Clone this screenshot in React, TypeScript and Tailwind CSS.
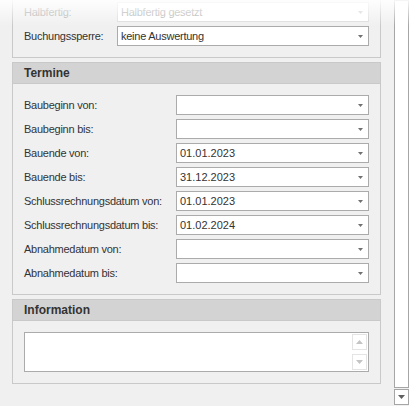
import React from "react";

const font = { fontFamily: '"Liberation Sans", Arial, sans-serif' };

function Arrow({ light }: { light?: boolean }) {
  return (
    <svg width="5" height="3" viewBox="0 0 5 3" className="shrink-0">
      <path d="M0 0H5L2.5 3Z" fill={light ? "#cfcfcf" : "#707070"} />
    </svg>
  );
}

function Combo({ value, disabled, date }: { value?: string; disabled?: boolean; date?: boolean }) {
  return (
    <div
      className={`flex h-5 flex-1 items-center justify-between border bg-white pl-[3px] pr-[5px] ${
        disabled ? "border-[#dcdcdc] text-[#a8a8a8]" : "border-[#ababab] text-[#333]"
      }`}
    >
      <span className={`leading-none ${date ? "tracking-normal" : ""}`}>{value}</span>
      <Arrow light={disabled} />
    </div>
  );
}

function Row({
  label,
  value,
  labelWidth,
  disabled,
  date,
}: {
  label: string;
  value?: string;
  labelWidth: string;
  disabled?: boolean;
  date?: boolean;
}) {
  return (
    <div className="flex h-5 items-center">
      <div className={`${labelWidth} shrink-0 ${disabled ? "text-[#a8a8a8]" : "text-[#333]"}`}>{label}</div>
      <Combo value={value} disabled={disabled} date={date} />
    </div>
  );
}

function Group({ title, children }: { title: string; children: React.ReactNode }) {
  return (
    <div className="border border-[#c9c9c9]">
      <div className="flex h-[21px] items-center border-b border-[#c9c9c9] bg-[#d3d3d3] pl-[11px] text-[12px] font-bold tracking-normal text-[#333]">
        {title}
      </div>
      <div className="px-[11px] pt-[11px] pb-[11px]">{children}</div>
    </div>
  );
}

function Spin({ up }: { up?: boolean }) {
  return (
    <div className="flex h-4 w-[15px] items-center justify-center border border-[#e4e4e4] bg-white">
      <svg width="7" height="4" viewBox="0 0 7 4">
        <path d={up ? "M0 4H7L3.5 0Z" : "M0 0H7L3.5 4Z"} fill="#c4c4c4" />
      </svg>
    </div>
  );
}

const termine: [string, string][] = [
  ["Baubeginn von:", ""],
  ["Baubeginn bis:", ""],
  ["Bauende von:", "01.01.2023"],
  ["Bauende bis:", "31.12.2023"],
  ["Schlussrechnungsdatum von:", "01.01.2023"],
  ["Schlussrechnungsdatum bis:", "01.02.2024"],
  ["Abnahmedatum von:", ""],
  ["Abnahmedatum bis:", ""],
];

export default function App() {
  return (
    <div
      className="relative flex h-[406px] w-[409px] overflow-hidden bg-[#f0f0f0] text-[11px] tracking-[-0.25px]"
      style={font}
    >
      <div className="flex w-[381px] flex-col gap-1 pl-3">
        <div className="border border-t-0 border-[#c9c9c9] px-[11px] pt-[2px] pb-[11px]">
          <div className="flex flex-col gap-1">
            <Row label="Halbfertig:" value="Halbfertig gesetzt" labelWidth="w-[93px]" disabled />
            <Row label="Buchungssperre:" value="keine Auswertung" labelWidth="w-[93px]" />
          </div>
        </div>

        <Group title="Termine">
          <div className="flex flex-col gap-1">
            {termine.map(([label, value]) => (
              <Row key={label} label={label} value={value} labelWidth="w-[152px]" date />
            ))}
          </div>
        </Group>

        <Group title="Information">
          <div className="flex h-10 justify-end border border-[#ababab] bg-white p-[1px]">
            <div className="flex flex-col justify-between">
              <Spin up />
              <Spin />
            </div>
          </div>
        </Group>
      </div>

      <div className="ml-auto flex w-[15px] flex-col gap-[1px] pb-[1px]">
        <div className="flex-1 border border-[#a6a6a6] bg-white" />
        <div className="flex h-4 items-center justify-center border border-[#a6a6a6] bg-white">
          <svg width="7" height="4" viewBox="0 0 7 4">
            <path d="M0 0H7L3.5 4Z" fill="#606060" />
          </svg>
        </div>
      </div>

      <div className="pointer-events-none absolute inset-x-0 top-0 h-[26px] bg-linear-to-b from-white/90 to-white/0" />
    </div>
  );
}
